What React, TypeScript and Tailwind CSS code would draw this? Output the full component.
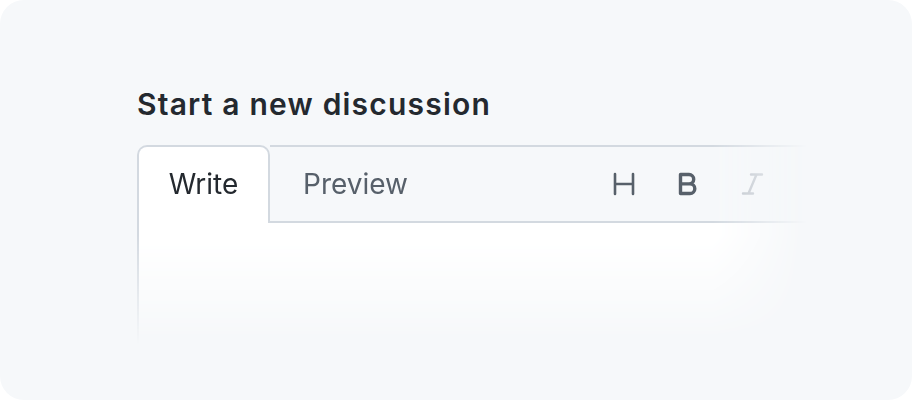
import React from 'react';

const fadeMask =
  '[mask-image:linear-gradient(to_right,black_86%,transparent),linear-gradient(to_bottom,black_45%,transparent)] [mask-composite:intersect] [-webkit-mask-composite:source-in]';

export default function App() {
  return (
    <div className="w-[912px] h-[400px] bg-white" style={{ fontFamily: 'Inter, "Noto Sans", sans-serif' }}>
      <div className="w-full h-full rounded-3xl bg-[#f6f8fa] pt-[86px] pl-[137px]">
        <h2 className="text-[30px] leading-[36px] font-semibold text-[#24292f] tracking-[1.2px]">
          Start a new discussion
        </h2>

        {/* Editor mockup, faded to the right and bottom */}
        <div className={`mt-[23px] w-[670px] h-[200px] ${fadeMask}`}>
          <div className="flex">
            <div className="w-[133px] h-[78px] bg-white border-2 border-b-0 border-[#d3d9e0] rounded-t-[10px] flex items-center justify-center pb-[2px] text-[28px] text-[#24292f]">
              Write
            </div>
            <div className="flex-1 h-[78px] bg-[#f6f8fa] border-t-2 border-b-2 border-[#d3d9e0] flex items-center pl-[33px] pr-[43px]">
              <span className="text-[28px] text-[#57606a] pb-[1px]">Preview</span>
              <div className="ml-auto flex items-center">
                <svg width="22" height="24" viewBox="0 0 22 24" fill="none" stroke="#57606a" strokeWidth="2.6" strokeLinecap="round">
                  <path d="M2 2v20M20 2v20M2 12h18" />
                </svg>
                <svg className="ml-[42px]" width="22" height="24" viewBox="0 0 22 24" fill="none" stroke="#57606a" strokeWidth="3.4" strokeLinejoin="round">
                  <path d="M3.5 2.5h8.5a4.7 4.7 0 0 1 0 9.4H3.5z M3.5 11.9h9.5a4.8 4.8 0 0 1 0 9.6H3.5z" />
                </svg>
                <svg className="ml-[41px]" width="24" height="24" viewBox="0 0 24 24" fill="none" stroke="#b9bfc7" strokeWidth="2.4" strokeLinecap="round">
                  <path d="M11 2.5h11M3 21.5h10M16.5 2.5 8.5 21.5" />
                </svg>
              </div>
            </div>
          </div>
          <div className="h-[122px] bg-white border-l-2 border-[#d3d9e0]" />
        </div>
      </div>
    </div>
  );
}
